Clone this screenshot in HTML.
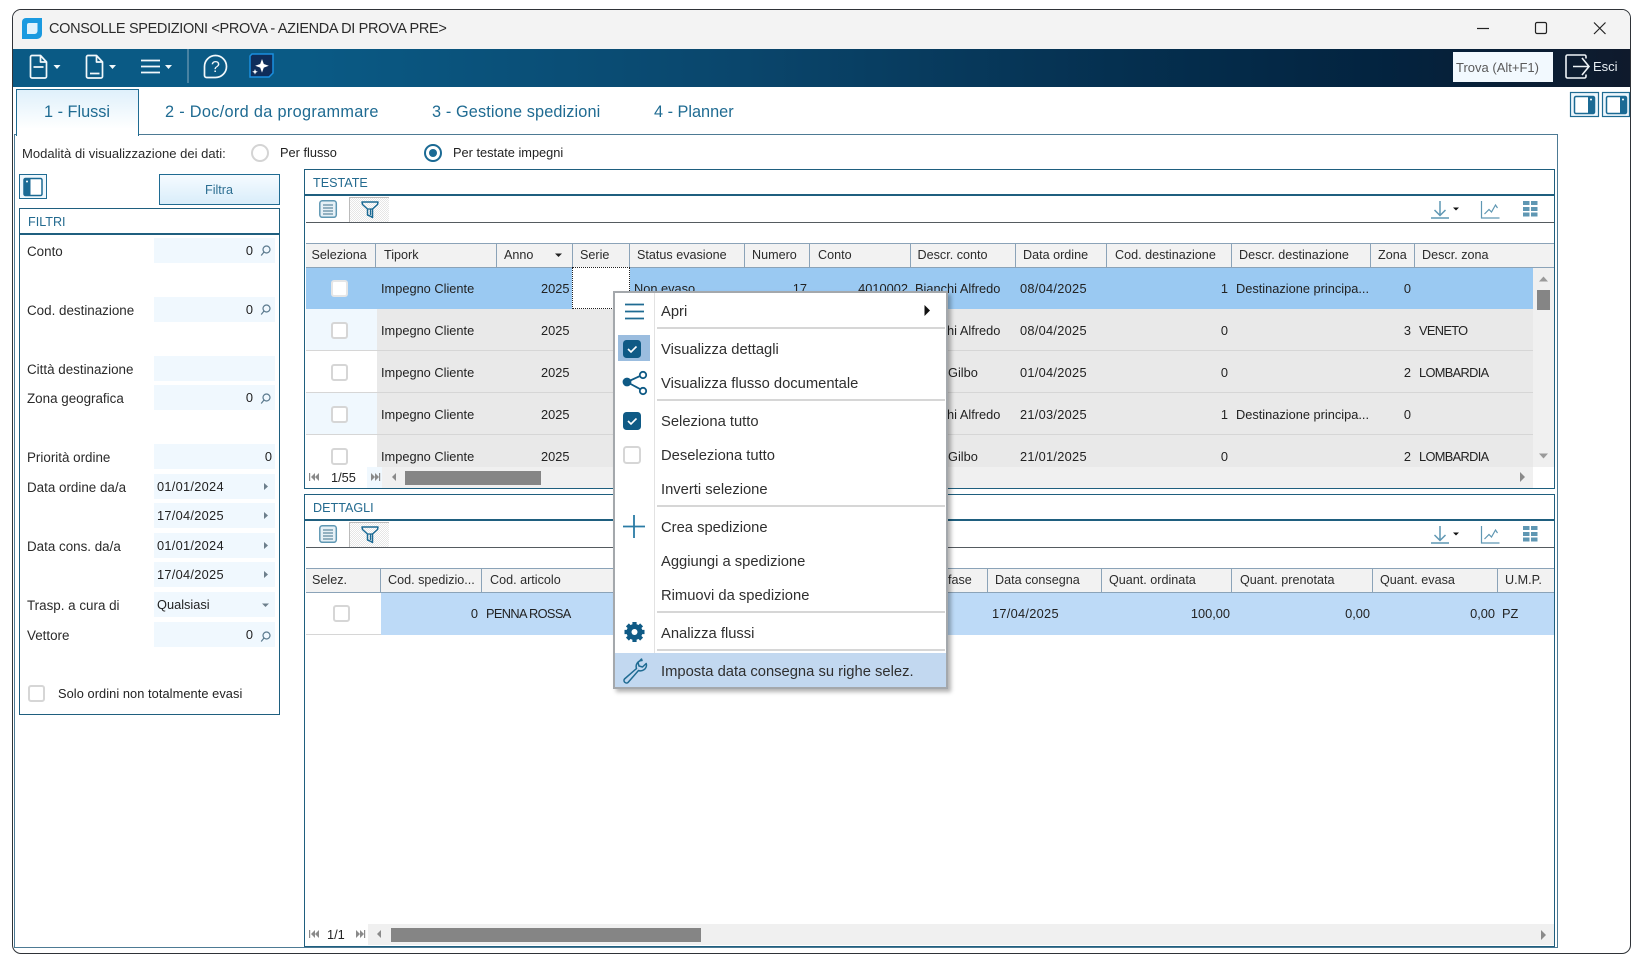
<!DOCTYPE html>
<html><head><meta charset="utf-8"><title>Consolle spedizioni</title>
<style>
html,body{margin:0;padding:0;background:#fff;width:1648px;height:957px;overflow:hidden}
body{position:relative;font-family:"Liberation Sans",Arial,sans-serif;color:#222}
div{position:absolute;box-sizing:border-box}
.t{white-space:nowrap;line-height:20px;height:20px;font-size:12.8px;color:#222;margin-top:1px}
.d{letter-spacing:.28px}
.u{letter-spacing:-.65px}
.h{white-space:nowrap;line-height:20px;height:20px;font-size:12.6px;color:#2b2b2b}
.l{white-space:nowrap;line-height:20px;height:20px;font-size:13.4px;color:#2a2a2a;left:27px;margin-top:1px}
.m{white-space:nowrap;line-height:20px;height:20px;font-size:14.75px;color:#2f2f2f;left:661px;margin-top:1px}
.f{background:#f0f8fe;left:154px;width:121px;height:25px}
.p{background:#fff;border:1px solid #1f5f7f}
.cap{white-space:nowrap;line-height:20px;height:20px;font-size:12.6px;color:#236a8f;margin-top:1px}
.tab{white-space:nowrap;line-height:24px;height:24px;font-size:16.3px;color:#1f6b92}
.hd{background:#f2f2f2;border-top:1.5px solid #8ba3b8;border-bottom:1.5px solid #8ba3b8;left:306px;width:1248px}
.s{width:1px;background:#8ba3b8}
.cb{width:17px;height:17px;background:#fff;border:2px solid #d6d6d6;border-radius:3px}
.sp{left:657px;width:288px;height:2px;background:#d6d6d6}
.tg{background:#e9e9e9;left:377px;width:1156px;height:42px;border-bottom:1px solid #d6d6d6}
.hatch{background:repeating-conic-gradient(#fff 0 25%,#e6e6e6 0 50%) 0 0/2px 2px;border-top:1px solid #bbb;border-left:1px solid #bbb}
</style></head><body>

<!-- window -->
<div style="left:12px;top:9px;width:1619px;height:945px;background:#fff;border:1.5px solid #2f3338;border-radius:9px;overflow:hidden">
  <div style="left:0;top:0;width:100%;height:39px;background:#f3f3f3"></div>
  <div style="left:0;top:39px;width:100%;height:38px;background:linear-gradient(90deg,#0a5a85 0%,#0a5a85 18%,#0a466c 45%,#053050 68%,#03233f 85%,#0f1a2c 100%)"></div>
</div>

<div class="t" style="left:49px;top:18px;font-size:14.5px;letter-spacing:-.34px;color:#2b2b2b">CONSOLLE SPEDIZIONI &lt;PROVA - AZIENDA DI PROVA PRE&gt;</div>

<!-- Trova / Esci -->
<div style="left:1453px;top:52px;width:100px;height:30px;background:#f2f9fe"></div>
<div class="t" style="left:1456px;top:57px;color:#5a5a5a;font-size:13px">Trova (Alt+F1)</div>
<div class="t" style="left:1593px;top:56px;color:#e8eef3;font-size:13px">Esci</div>

<!-- tabs -->
<div style="left:14px;top:134px;width:1544px;height:814px;border:1px solid #4d7a94;border-top-width:1.5px;background:#fff"></div>
<div style="left:16px;top:89px;width:123px;height:47px;background:linear-gradient(180deg,#dff0fb 0%,#fff 85%);border:1.5px solid #1f6b92;border-bottom:none"></div>
<div class="tab" style="left:44px;top:100px">1 - Flussi</div>
<div class="tab" style="left:165px;top:100px;letter-spacing:.32px">2 - Doc/ord da programmare</div>
<div class="tab" style="left:432px;top:100px;letter-spacing:.12px">3 - Gestione spedizioni</div>
<div class="tab" style="left:654px;top:100px">4 - Planner</div>

<!-- radio row -->
<div class="l" style="left:22px;top:143px;font-size:13.05px">Modalità di visualizzazione dei dati:</div>
<div style="left:251px;top:144px;width:18px;height:18px;border:2px solid #d4d4d4;border-radius:50%;background:#fff"></div>
<div class="t" style="left:280px;top:142px">Per flusso</div>
<div style="left:424px;top:144px;width:18px;height:18px;border:2px solid #1b6a94;border-radius:50%;background:#fff"></div>
<div style="left:429px;top:149px;width:8px;height:8px;border-radius:50%;background:#1b6a94"></div>
<div class="t" style="left:453px;top:142px">Per testate impegni</div>

<!-- left panel -->
<div style="left:19px;top:174px;width:28px;height:25px;border:1.5px solid #1f6b92;background:#eef7fd"></div>
<div style="left:159px;top:174px;width:121px;height:31px;border:1.5px solid #1f6b92;background:linear-gradient(180deg,#f6fbff,#d9edfa)"></div>
<div class="t" style="left:205px;top:179px;color:#2d6f92;font-size:12.6px">Filtra</div>

<div class="p" style="left:19px;top:208px;width:261px;height:507px"></div>
<div style="left:19px;top:233px;width:261px;height:1.5px;background:#1f5f7f"></div>
<div class="cap" style="left:28px;top:211px">FILTRI</div>

<div class="f" style="top:238px"></div><div class="f" style="top:297px"></div><div class="f" style="top:356px"></div>
<div class="f" style="top:385px"></div><div class="f" style="top:444px"></div><div class="f" style="top:474px"></div>
<div class="f" style="top:503px"></div><div class="f" style="top:533px"></div><div class="f" style="top:562px"></div>
<div class="f" style="top:592px"></div><div class="f" style="top:622px"></div>

<div class="l" style="top:240.500px">Conto</div>
<div class="l" style="top:299.500px">Cod. destinazione</div>
<div class="l" style="top:358.500px">Città destinazione</div>
<div class="l" style="top:387.500px">Zona geografica</div>
<div class="l" style="top:446.500px">Priorità ordine</div>
<div class="l" style="top:476.500px">Data ordine da/a</div>
<div class="l" style="top:535.500px">Data cons. da/a</div>
<div class="l" style="top:594.500px">Trasp. a cura di</div>
<div class="l" style="top:624.500px">Vettore</div>

<div class="t" style="right:1395px;top:240px">0</div>
<div class="t" style="right:1395px;top:299px">0</div>
<div class="t" style="right:1395px;top:387px">0</div>
<div class="t" style="right:1376px;top:446px">0</div>
<div class="t d" style="left:157px;top:476px">01/01/2024</div>
<div class="t d" style="left:157px;top:505px">17/04/2025</div>
<div class="t d" style="left:157px;top:535px">01/01/2024</div>
<div class="t d" style="left:157px;top:564px">17/04/2025</div>
<div class="t" style="left:157px;top:594px">Qualsiasi</div>
<div class="t" style="right:1395px;top:624px">0</div>

<div class="cb" style="left:28px;top:685px"></div>
<div class="t" style="left:58px;top:683px;letter-spacing:.07px">Solo ordini non totalmente evasi</div>

<!-- TESTATE panel -->
<div class="p" style="left:304px;top:169px;width:1251px;height:320px;border-width:1.5px"></div>
<div style="left:304px;top:194px;width:1251px;height:1.5px;background:#1f5f7f"></div>
<div class="cap" style="left:313px;top:172px">TESTATE</div>
<div style="left:306px;top:222px;width:1248px;height:1px;background:#555b60"></div>
<div class="hatch" style="left:349px;top:197px;width:40px;height:25px"></div>

<div class="hd" style="top:243px;height:25px"></div>
<div class="s" style="left:375px;top:243px;height:25px"></div>
<div class="s" style="left:496px;top:243px;height:25px"></div>
<div class="s" style="left:572px;top:243px;height:25px"></div>
<div class="s" style="left:629px;top:243px;height:25px"></div>
<div class="s" style="left:744px;top:243px;height:25px"></div>
<div class="s" style="left:809px;top:243px;height:25px"></div>
<div class="s" style="left:910px;top:243px;height:25px"></div>
<div class="s" style="left:1015px;top:243px;height:25px"></div>
<div class="s" style="left:1106px;top:243px;height:25px"></div>
<div class="s" style="left:1231px;top:243px;height:25px"></div>
<div class="s" style="left:1370px;top:243px;height:25px"></div>
<div class="s" style="left:1414px;top:243px;height:25px"></div>
<div class="h" style="left:311.500px;top:245px">Seleziona</div>
<div class="h" style="left:384px;top:245px">Tipork</div>
<div class="h" style="left:504px;top:245px">Anno</div>
<div class="h" style="left:580px;top:245px">Serie</div>
<div class="h" style="left:637px;top:245px">Status evasione</div>
<div class="h" style="left:752px;top:245px">Numero</div>
<div class="h" style="left:818px;top:245px">Conto</div>
<div class="h" style="left:917.500px;top:245px">Descr. conto</div>
<div class="h" style="left:1023px;top:245px">Data ordine</div>
<div class="h" style="left:1115px;top:245px">Cod. destinazione</div>
<div class="h" style="left:1239px;top:245px">Descr. destinazione</div>
<div class="h" style="left:1378px;top:245px">Zona</div>
<div class="h" style="left:1422px;top:245px">Descr. zona</div>

<!-- rows -->
<div style="left:306px;top:268px;width:1227px;height:41px;background:#9ac9f2"></div>
<div style="left:306px;top:309px;width:71px;height:42px;background:#f0f8fe;border-bottom:1px solid #d6d6d6"></div>
<div style="left:306px;top:351px;width:71px;height:42px;background:#fff;border-bottom:1px solid #d6d6d6"></div>
<div style="left:306px;top:393px;width:71px;height:42px;background:#f0f8fe;border-bottom:1px solid #d6d6d6"></div>
<div style="left:306px;top:435px;width:71px;height:32px;background:#fff"></div>
<div class="tg" style="top:309px"></div><div class="tg" style="top:351px"></div><div class="tg" style="top:393px"></div>
<div class="tg" style="top:435px;height:32px;border:none"></div>
<div style="left:572px;top:267px;width:58px;height:42px;background:#fff;border:1px dotted #222"></div>
<!-- v scrollbar -->
<div style="left:1533px;top:268px;width:21px;height:199px;background:#f0f0f0"></div>
<div style="left:1537px;top:290px;width:13px;height:20px;background:#858585"></div>
<!-- footer -->
<div style="left:382px;top:467px;width:1151px;height:21px;background:#f0f0f0"></div>
<div style="left:367px;top:467px;width:15px;height:21px;background:#f0f8fe"></div>
<div style="left:405px;top:471px;width:136px;height:14px;background:#858585"></div>
<div class="t" style="left:331px;top:467px">1/55</div>

<div class="cb" style="left:331px;top:280px;border-color:#e6e6e6"></div>
<div class="cb" style="left:331px;top:322px"></div>
<div class="cb" style="left:331px;top:364px"></div>
<div class="cb" style="left:331px;top:406px"></div>
<div class="cb" style="left:331px;top:448px"></div>

<!-- row texts -->
<div class="t" style="left:381px;top:278px">Impegno Cliente</div><div class="t" style="right:1078.500px;top:278px">2025</div>
<div class="t" style="left:381px;top:320px">Impegno Cliente</div><div class="t" style="right:1078.500px;top:320px">2025</div>
<div class="t" style="left:381px;top:362px">Impegno Cliente</div><div class="t" style="right:1078.500px;top:362px">2025</div>
<div class="t" style="left:381px;top:404px">Impegno Cliente</div><div class="t" style="right:1078.500px;top:404px">2025</div>
<div class="t" style="left:381px;top:446px">Impegno Cliente</div><div class="t" style="right:1078.500px;top:446px">2025</div>

<div class="t" style="left:634px;top:278px">Non evaso</div><div class="t" style="right:841px;top:278px">17</div><div class="t" style="right:740px;top:278px">4010002</div>
<div class="t" style="left:915px;top:278px">Bianchi Alfredo</div>
<div class="t" style="left:915px;top:320px">Bianchi Alfredo</div>
<div class="t" style="left:948px;top:362px">Gilbo</div>
<div class="t" style="left:915px;top:404px">Bianchi Alfredo</div>
<div class="t" style="left:948px;top:446px">Gilbo</div>

<div class="t d" style="left:1020px;top:278px">08/04/2025</div><div class="t" style="right:420px;top:278px">1</div><div class="t" style="left:1236px;top:278px">Destinazione principa...</div><div class="t" style="right:237px;top:278px">0</div>
<div class="t d" style="left:1020px;top:320px">08/04/2025</div><div class="t" style="right:420px;top:320px">0</div><div class="t" style="right:237px;top:320px">3</div><div class="t u" style="left:1419px;top:320px">VENETO</div>
<div class="t d" style="left:1020px;top:362px">01/04/2025</div><div class="t" style="right:420px;top:362px">0</div><div class="t" style="right:237px;top:362px">2</div><div class="t u" style="left:1419px;top:362px">LOMBARDIA</div>
<div class="t d" style="left:1020px;top:404px">21/03/2025</div><div class="t" style="right:420px;top:404px">1</div><div class="t" style="left:1236px;top:404px">Destinazione principa...</div><div class="t" style="right:237px;top:404px">0</div>
<div class="t d" style="left:1020px;top:446px">21/01/2025</div><div class="t" style="right:420px;top:446px">0</div><div class="t" style="right:237px;top:446px">2</div><div class="t u" style="left:1419px;top:446px">LOMBARDIA</div>

<!-- DETTAGLI panel -->
<div class="p" style="left:304px;top:494px;width:1251px;height:453px;border-width:1.5px"></div>
<div style="left:304px;top:519px;width:1251px;height:1.5px;background:#1f5f7f"></div>
<div class="cap" style="left:313px;top:497px">DETTAGLI</div>
<div style="left:306px;top:547px;width:1248px;height:1px;background:#555b60"></div>
<div class="hatch" style="left:349px;top:522px;width:40px;height:25px"></div>

<div class="hd" style="top:568px;height:25px"></div>
<div class="s" style="left:380px;top:568px;height:25px"></div>
<div class="s" style="left:481px;top:568px;height:25px"></div>
<div class="s" style="left:987px;top:568px;height:25px"></div>
<div class="s" style="left:1101px;top:568px;height:25px"></div>
<div class="s" style="left:1231px;top:568px;height:25px"></div>
<div class="s" style="left:1372px;top:568px;height:25px"></div>
<div class="s" style="left:1497px;top:568px;height:25px"></div>
<div class="h" style="left:312px;top:570px">Selez.</div>
<div class="h" style="left:388px;top:570px">Cod. spedizio...</div>
<div class="h" style="left:490px;top:570px">Cod. articolo</div>
<div class="h" style="left:948px;top:570px">fase</div>
<div class="h" style="left:995px;top:570px">Data consegna</div>
<div class="h" style="left:1109px;top:570px">Quant. ordinata</div>
<div class="h" style="left:1240px;top:570px">Quant. prenotata</div>
<div class="h" style="left:1380px;top:570px">Quant. evasa</div>
<div class="h" style="left:1505px;top:570px">U.M.P.</div>

<div style="left:306px;top:593px;width:75px;height:42px;background:#fff;border-bottom:1px solid #d6d6d6"></div>
<div style="left:381px;top:593px;width:1173px;height:42px;background:#bddaf7"></div>
<div class="cb" style="left:333px;top:605px"></div>
<div class="t" style="right:1170px;top:603px">0</div>
<div class="t u" style="left:486px;top:603px">PENNA ROSSA</div>
<div class="t d" style="left:992px;top:603px">17/04/2025</div>
<div class="t" style="right:418px;top:603px">100,00</div>
<div class="t" style="right:278px;top:603px">0,00</div>
<div class="t" style="right:153px;top:603px">0,00</div>
<div class="t" style="left:1502px;top:603px">PZ</div>

<div style="left:368px;top:924px;width:1186px;height:21px;background:#f0f0f0"></div>
<div style="left:391px;top:928px;width:310px;height:14px;background:#858585"></div>
<div class="t" style="left:327px;top:924px">1/1</div>

<!-- context menu -->
<div style="left:613px;top:291px;width:335px;height:398px;background:#fff;border:2px solid #a4a8ac;box-shadow:3px 3px 4px rgba(0,0,0,.3)"></div>
<div style="left:654px;top:293px;width:1px;height:360px;background:#e2e2e2"></div>
<div style="left:618px;top:335px;width:32px;height:26px;background:#9bbddf"></div>
<div style="left:615px;top:653px;width:331px;height:34px;background:#c2d8f0"></div>
<div class="sp" style="top:327px"></div><div class="sp" style="top:399px"></div><div class="sp" style="top:505px"></div><div class="sp" style="top:611px"></div><div class="sp" style="top:649px"></div>
<div class="m" style="top:301px">Apri</div>
<div class="m" style="top:339px">Visualizza dettagli</div>
<div class="m" style="top:373px">Visualizza flusso documentale</div>
<div class="m" style="top:411px">Seleziona tutto</div>
<div class="m" style="top:445px">Deseleziona tutto</div>
<div class="m" style="top:479px">Inverti selezione</div>
<div class="m" style="top:517px">Crea spedizione</div>
<div class="m" style="top:551px">Aggiungi a spedizione</div>
<div class="m" style="top:585px">Rimuovi da spedizione</div>
<div class="m" style="top:623px">Analizza flussi</div>
<div class="m" style="top:661px">Imposta data consegna su righe selez.</div>

<!-- all icons -->
<svg width="1648" height="957" viewBox="0 0 1648 957" style="position:absolute;left:0;top:0" fill="none">
 <!-- app icon -->
 <path d="M26 18h16v16a5 5 0 0 1-5 5H22V22a4 4 0 0 1 4-4z" fill="#1a9ae0"/>
 <path d="M29 23h8.500v8a3 3 0 0 1-3 3H27v-9a2 2 0 0 1 2-2z" fill="#dff2fd"/>
 <!-- window controls -->
 <path d="M1477 28.500h12" stroke="#222" stroke-width="1.200"/>
 <rect x="1535.500" y="22.500" width="11" height="11" rx="1.500" stroke="#222" stroke-width="1.200"/>
 <path d="M1594 22.500l11.500 11.500M1605.500 22.500L1594 34" stroke="#222" stroke-width="1.200"/>
 <!-- toolbar icons -->
 <g stroke="#f2f8fb" stroke-width="1.700" stroke-linejoin="round">
  <path d="M30.500 57a1.500 1.500 0 0 1 1.500-1.500h8.500l6 6.500v14.500a1.500 1.500 0 0 1-1.500 1.500H32a1.500 1.500 0 0 1-1.500-1.500zM40.500 55.500v6.500h6M33.500 67h10"/>
  <path d="M86.500 57a1.500 1.500 0 0 1 1.500-1.500h8.500l6 6.500v14.500a1.500 1.500 0 0 1-1.500 1.500H88a1.500 1.500 0 0 1-1.500-1.500zM96.500 55.500v6.500h6M90 73.500h9.500"/>
  <path d="M141 60.500h19M141 66.500h19M141 72.500h19" stroke-width="1.800"/>
  <path d="M215.500 55.500a11 11 0 0 1 11 11 11 11 0 0 1-11 11h-9a2 2 0 0 1-2-2v-9a11 11 0 0 1 11-11z"/>
 </g>
 <path d="M53.500 65h7l-3.500 4zM109 65h7l-3.500 4zM165 65h7l-3.500 4z" fill="#f2f8fb"/>
 <path d="M188 49v34" stroke="#5d8fac" stroke-width="1.500"/>
 <text x="211" y="72" font-family="Liberation Sans,sans-serif" font-size="16" fill="#f2f8fb">?</text>
 <path d="M252 54h21v19l-4 4h-19v-21z" fill="#0f2d5a" stroke="#1a8fe0" stroke-width="1.500"/>
 <path d="M262 59l1.800 5 5 1.800-5 1.800-1.800 5-1.800-5-5-1.800 5-1.800z" fill="#fff"/>
 <path d="M255 69l.8 2 2 .8-2 .8-.8 2-.8-2-2-.8 2-.8z" fill="#fff"/>
 <!-- esci -->
 <path d="M1586 58.500v-2a1.500 1.500 0 0 0-1.500-1.500h-17a1.500 1.500 0 0 0-1.500 1.500v20a1.500 1.500 0 0 0 1.500 1.500h17a1.500 1.500 0 0 0 1.500-1.500v-2M1573 66.500h15M1582 58l7 8.500-7 8.500" stroke="#eef4f8" stroke-width="1.600"/>
 <!-- panel toggles -->
 <rect x="1570.500" y="92.500" width="28" height="24" fill="#eef7fd" stroke="#1f6b92" stroke-width="1.200"/>
 <rect x="1574.500" y="96.500" width="20" height="17" rx="1.500" fill="#fff" stroke="#1b6a94" stroke-width="1.500"/>
 <rect x="1588" y="96.500" width="6.500" height="17" fill="#1b6a94"/><circle cx="1591" cy="99.500" r="1" fill="#fff"/>
 <rect x="1602.500" y="92.500" width="27" height="24" fill="#eef7fd" stroke="#1f6b92" stroke-width="1.200"/>
 <rect x="1606.500" y="96.500" width="20" height="17" rx="1.500" fill="#fff" stroke="#1b6a94" stroke-width="1.500"/>
 <rect x="1620" y="96.500" width="6.500" height="17" fill="#1b6a94"/><circle cx="1623" cy="99.500" r="1" fill="#fff"/>
 <!-- left panel toggle -->
 <rect x="24" y="178.500" width="18" height="17" rx="1.500" fill="#fff" stroke="#1b6a94" stroke-width="1.500"/>
 <rect x="24" y="178.500" width="6.500" height="17" fill="#1b6a94"/><circle cx="27" cy="181.500" r="1" fill="#fff"/>
 <!-- search icons -->
 <g stroke="#5b7a8e" stroke-width="1.200"><circle cx="266.500" cy="249.500" r="3.500"/><path d="M264 252l-2.800 3.500"/>
 <circle cx="266.500" cy="308.500" r="3.500"/><path d="M264 311l-2.800 3.500"/>
 <circle cx="266.500" cy="397.500" r="3.500"/><path d="M264 400l-2.800 3.500"/>
 <circle cx="266.500" cy="635.500" r="3.500"/><path d="M264 638l-2.800 3.500"/></g>
 <path d="M264 483l4 3.500-4 3.500zM264 512l4 3.500-4 3.500zM264 542l4 3.500-4 3.500zM264 571l4 3.500-4 3.500z" fill="#6d7f8c"/>
 <path d="M262 603.500h7l-3.500 3.500z" fill="#6d7f8c"/>
 <!-- testate toolbar -->
 <g>
  <rect x="319.800" y="200.800" width="16.500" height="16.500" rx="2.500" fill="#e6f0f6" stroke="#5f97b3" stroke-width="1.500"/>
  <path d="M323 205h10M323 208h10M323 211h10M323 214h10" stroke="#5f8aa0" stroke-width="1.200"/>
  <path d="M362 202h16l-.5 2.500-5 4.500v8.500l-2.500-1.500-2.500-1v-6l-5-4.500z" stroke="#1b6a94" stroke-width="1.500" stroke-linejoin="round"/>
  <path d="M368 209h5M370.500 209v6" stroke="#1b6a94" stroke-width="1.300"/>
  <path d="M1440 201v14M1434.500 210l5.500 5.500 5.500-5.500" stroke="#5f97b3" stroke-width="1.500"/><path d="M1431 218h18" stroke="#5f97b3" stroke-width="1.500"/>
  <path d="M1453 207.500h6l-3 3z" fill="#111"/>
  <path d="M1481.500 201v17h18M1484.500 214l4.500-4.500 2.500 2.500 4-7 2 3" stroke="#5f97b3" stroke-width="1.200"/>
  <path d="M1523 201h6.500v4H1523zM1531 201h6.500v4H1531zM1523 207h6.500v4H1523zM1531 207h6.500v4H1531zM1523 212.500h6.500v4H1523zM1531 212.500h6.500v4H1531z" fill="#5f97b3"/>
 </g>
 <!-- dettagli toolbar -->
 <g transform="translate(0 325)">
  <rect x="319.800" y="200.800" width="16.500" height="16.500" rx="2.500" fill="#e6f0f6" stroke="#5f97b3" stroke-width="1.500"/>
  <path d="M323 205h10M323 208h10M323 211h10M323 214h10" stroke="#5f8aa0" stroke-width="1.200"/>
  <path d="M362 202h16l-.5 2.500-5 4.500v8.500l-2.500-1.500-2.500-1v-6l-5-4.500z" stroke="#1b6a94" stroke-width="1.500" stroke-linejoin="round"/>
  <path d="M368 209h5M370.500 209v6" stroke="#1b6a94" stroke-width="1.300"/>
  <path d="M1440 201v14M1434.500 210l5.500 5.500 5.500-5.500" stroke="#5f97b3" stroke-width="1.500"/><path d="M1431 218h18" stroke="#5f97b3" stroke-width="1.500"/>
  <path d="M1453 207.500h6l-3 3z" fill="#111"/>
  <path d="M1481.500 201v17h18M1484.500 214l4.500-4.500 2.500 2.500 4-7 2 3" stroke="#5f97b3" stroke-width="1.200"/>
  <path d="M1523 201h6.500v4H1523zM1531 201h6.500v4H1531zM1523 207h6.500v4H1523zM1531 207h6.500v4H1531zM1523 212.500h6.500v4H1523zM1531 212.500h6.500v4H1531z" fill="#5f97b3"/>
 </g>
 <!-- sort arrow -->
 <path d="M555 253.500h7l-3.500 3.500z" fill="#222"/>
 <!-- v scroll arrows -->
 <path d="M1539 281.500h9l-4.500-5z" fill="#9a9a9a"/><path d="M1539 453.500h9l-4.500 5z" fill="#9a9a9a"/>
 <!-- pagers -->
 <g fill="#8a8a8a">
  <path d="M309 473h1.200v8H309zM315 473v8l-4-4zM319 473v8l-4-4z"/>
  <path d="M371 473v8l4-4zM375 473v8l4-4zM379 473h1.200v8H379z"/>
  <path d="M396 473v8l-4-4z"/><path d="M1520 472v10l5-5z"/>
  <path d="M309 930h1.200v8H309zM315 930v8l-4-4zM319 930v8l-4-4z"/>
  <path d="M356 930v8l4-4zM360 930v8l4-4zM364 930h1.200v8H364z"/>
  <path d="M381 930v8l-4-4z"/><path d="M1541 930v10l5-5z"/>
 </g>
 <!-- menu icons -->
 <path d="M625 304.500h19M625 311.500h19M625 318.500h19" stroke="#1f6b92" stroke-width="1.800"/>
 <path d="M924.500 305v11l5.500-5.500z" fill="#111"/>
 <rect x="623" y="340" width="18" height="18" rx="3.500" fill="#0f5a85"/>
 <path d="M628 349l3 3 5.500-5.500" stroke="#fff" stroke-width="1.600"/>
 <g stroke="#0f5a85" stroke-width="1.800">
  <path d="M627 382l13-6M627 382l13 7"/>
  <circle cx="627" cy="382" r="3.500" fill="#0f5a85"/>
  <circle cx="643" cy="375" r="3.200" fill="#fff"/>
  <circle cx="643" cy="391" r="3.200" fill="#fff"/>
 </g>
 <rect x="623" y="412" width="18" height="18" rx="3.500" fill="#0f5a85"/>
 <path d="M628 421l3 3 5.500-5.500" stroke="#fff" stroke-width="1.600"/>
 <rect x="624" y="447" width="16" height="16" rx="2.500" fill="#fff" stroke="#d6d6d6" stroke-width="2"/>
 <path d="M634 515v23M623 526.500h22" stroke="#2a7ba5" stroke-width="1.800"/>
 <g transform="translate(634.500 632)">
  <circle r="8" fill="#0f5a85"/>
  <g stroke="#0f5a85" stroke-width="4.200"><path d="M0-10V-6M0 6v4M-10 0h4M6 0h4M-7.100-7.100l2.800 2.800M4.300 4.300l2.800 2.800M-7.100 7.100l2.800-2.800M4.300-4.300l2.800-2.800"/></g>
  <circle r="3" fill="#fff"/>
 </g>
 <path d="M642 660.500a6 6 0 0 0-5.500 8l-12 10.500a2.500 2.500 0 0 0 3.500 3.500l10.500-12a6 6 0 0 0 8-5.500l-.3-1.500-3.700 3.500-3.500-1-1-3.500 3.500-3.500z" stroke="#1f6b92" stroke-width="1.500" stroke-linejoin="round"/>
</svg>
</body></html>
